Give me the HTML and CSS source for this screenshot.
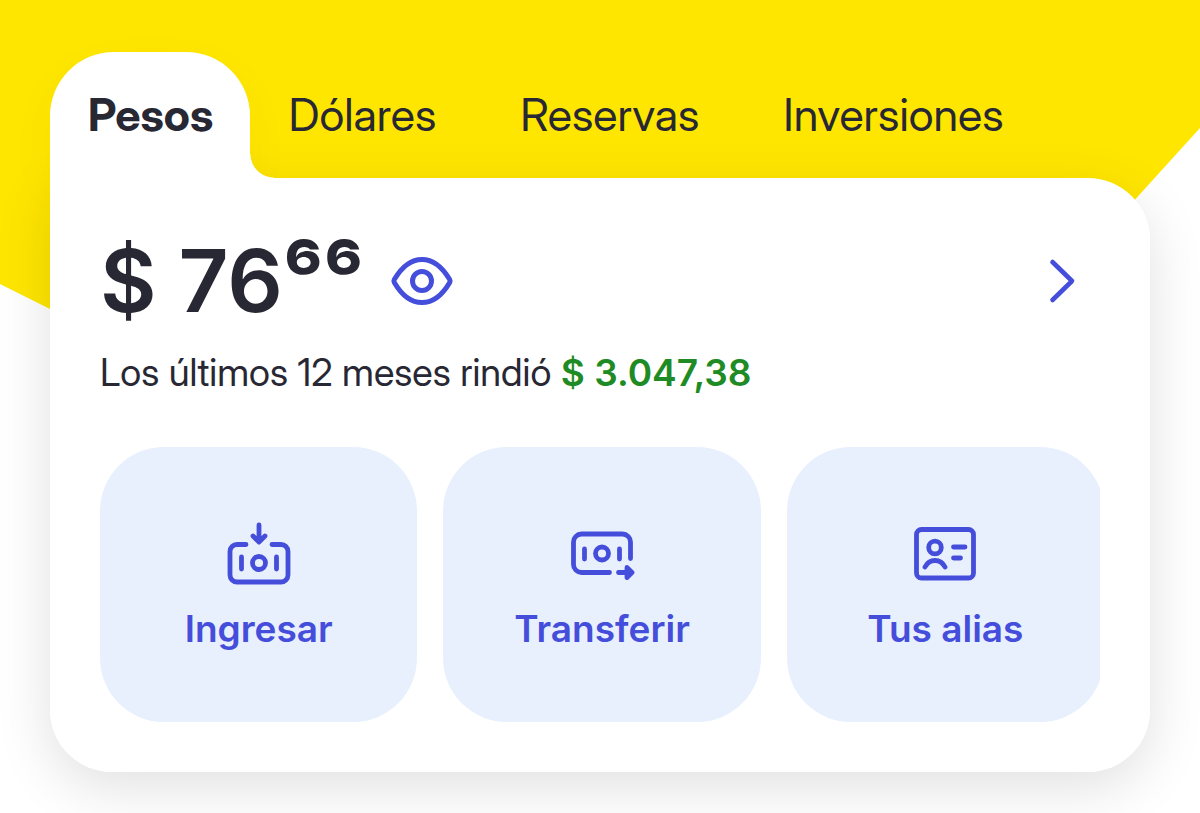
FILE: index.html
```html
<!DOCTYPE html>
<html lang="es">
<head>
<meta charset="utf-8">
<meta name="viewport" content="width=device-width, initial-scale=1">
<title>Cuenta</title>
<link rel="stylesheet" href="styles.css">
</head>
<body>
<main class="screen">
  <div class="tabs" role="tablist" aria-label="Cuentas">
    <button class="tab tab-active" id="tab-pesos" type="button" role="tab" aria-selected="true" aria-controls="panel-pesos">Pesos</button>
    <button class="tab" type="button" role="tab" aria-selected="false">Dólares</button>
    <button class="tab" type="button" role="tab" aria-selected="false">Reservas</button>
    <button class="tab" type="button" role="tab" aria-selected="false">Inversiones</button>
  </div>
  <section class="card" id="panel-pesos" role="tabpanel" aria-labelledby="tab-pesos">
    <div class="balance">
      <span class="amount">$ 76⁶⁶</span>
      <button class="icon-button" type="button" aria-label="Ocultar saldo">
        <svg width="64" height="52" viewBox="0 0 64 52" fill="none" stroke="currentColor" stroke-width="5">
          <path d="M4.300 24.600C12 11.500 21.500 4.500 32 4.500s20 7 27.700 20.100a2.800 2.800 0 0 1 0 2.800C52 40.500 42.500 47.500 32 47.500S12 40.500 4.300 27.400a2.800 2.800 0 0 1 0-2.800Z"/>
          <circle cx="32" cy="26" r="9.500"/>
        </svg>
      </button>
      <button class="icon-button more" type="button" aria-label="Ver detalle">
        <svg width="28" height="46" viewBox="0 0 28 46" fill="none" stroke="currentColor" stroke-width="4.600" stroke-linecap="round" stroke-linejoin="round">
          <path d="M4.500 4l19.500 19L4.500 42"/>
        </svg>
      </button>
    </div>
    <p class="yield">Los últimos 12 meses rindió <strong class="gain">$ 3.047,38</strong></p>
    <div class="actions">
      <button class="action" type="button">
        <svg class="action-icon" viewBox="0 0 66 66" fill="none" stroke="currentColor" stroke-width="4.800" stroke-linecap="round" stroke-linejoin="round">
          <path d="M20 22.500H11a7 7 0 0 0-7 7V53a7 7 0 0 0 7 7h44a7 7 0 0 0 7-7V29.500a7 7 0 0 0-7-7h-9"/>
          <path d="M33 3v17M27 14l6 6 6-6M15.500 35v12M50.500 35v12"/>
          <circle cx="33" cy="41" r="6.500"/>
        </svg>
        <span>Ingresar</span>
      </button>
      <button class="action" type="button">
        <svg class="action-icon" viewBox="0 0 66 66" fill="none" stroke="currentColor" stroke-width="4.800" stroke-linecap="round" stroke-linejoin="round">
          <path d="M61.500 36.500V20a8 8 0 0 0-8-8H12.500a8 8 0 0 0-8 8v22.500a8 8 0 0 0 8 8h28"/>
          <path d="M15.500 27v10M50.500 27v10M49.500 50.500H62M58 45.500l5 5-5 5z"/>
          <circle cx="33" cy="31.500" r="6.500"/>
        </svg>
        <span>Transferir</span>
      </button>
      <button class="action" type="button">
        <svg class="action-icon" viewBox="0 0 66 66" fill="none" stroke="currentColor" stroke-width="4.800" stroke-linecap="round" stroke-linejoin="round">
          <rect x="4.500" y="7.500" width="57" height="48.500" rx="5"/>
          <path d="M13 45c2-4 5.500-6.500 10-6.500s8 2.500 10 6.500M41.500 25h11.500M41.500 36h7"/>
          <circle cx="23" cy="25.500" r="6.300"/>
        </svg>
        <span>Tus alias</span>
      </button>
    </div>
  </section>
</main>
</body>
</html>
```
FILE: styles.css
```css
* { box-sizing: border-box; }

body {
  margin: 0;
  background: #fff;
  color: #282834;
  font-family: Inter, "Liberation Sans", sans-serif;
}

button {
  margin: 0;
  padding: 0;
  border: 0;
  background: none;
  color: inherit;
  font: inherit;
  cursor: pointer;
}

.screen {
  position: relative;
  isolation: isolate;
  overflow: hidden;
  padding: 52px 50px 41px;
}

.screen::before {
  content: "";
  position: absolute;
  inset: 0;
  z-index: -2;
  background: #ffe600;
  clip-path: polygon(0 0, 100% 0, 100% 128px, 728px 648px, 0 284px);
}

.tabs,
.yield {
  font-family: "Inter Display", Inter, "Liberation Sans", sans-serif;
}

.tabs {
  display: flex;
}

.tab {
  height: 126px;
  padding: 0 46px 0 38px;
  font-size: 45px;
  line-height: 52px;
  font-weight: 400;
}

.tab-active {
  position: relative;
  padding: 0 37px 0 38px;
  border-radius: 64px 64px 0 0;
  background: #fff;
  font-weight: 700;
  box-shadow: 0 16px 48px rgba(0, 0, 0, 0.04);
}

/* Concave joint between the active tab and the card */
.tab-active::after {
  content: "";
  position: absolute;
  left: 100%;
  bottom: 0;
  width: 24px;
  height: 24px;
  background: radial-gradient(circle at 100% 0, transparent 23px, #fff 24px);
}

.card {
  position: relative;
  padding: 50px;
  border-radius: 0 62px 62px 62px;
  background: #fff;
}

.card::before {
  content: "";
  position: absolute;
  inset: 0;
  z-index: -1;
  border-radius: inherit;
  box-shadow: 0 16px 56px rgba(0, 0, 0, 0.12);
}

.balance {
  display: flex;
  align-items: center;
}

.amount {
  font-size: 87px;
  line-height: 106px;
  font-weight: 600;
}

.icon-button {
  display: flex;
  margin-left: 26px;
  color: #454edb;
}

.more {
  margin-left: auto;
  margin-right: 24px;
}

.yield {
  margin: 14px 0 0;
  font-size: 38px;
  line-height: 48px;
  font-weight: 400;
}

.gain {
  color: #1f8b24;
  font-family: Inter, "Liberation Sans", sans-serif;
  font-size: 37px;
  font-weight: 600;
}

.actions {
  display: flex;
  gap: 26px;
  margin-top: 50px;
  overflow: hidden;
}

.action {
  display: flex;
  flex: 0 0 calc((100% - 48px) / 3);
  flex-direction: column;
  align-items: center;
  gap: 16px;
  padding: 75px 0 68px;
  border-radius: 64px;
  background: #e8f0fe;
  color: #454edb;
  font-size: 37px;
  line-height: 50px;
  font-weight: 600;
}

.action-icon {
  width: 66px;
  height: 66px;
}
```
